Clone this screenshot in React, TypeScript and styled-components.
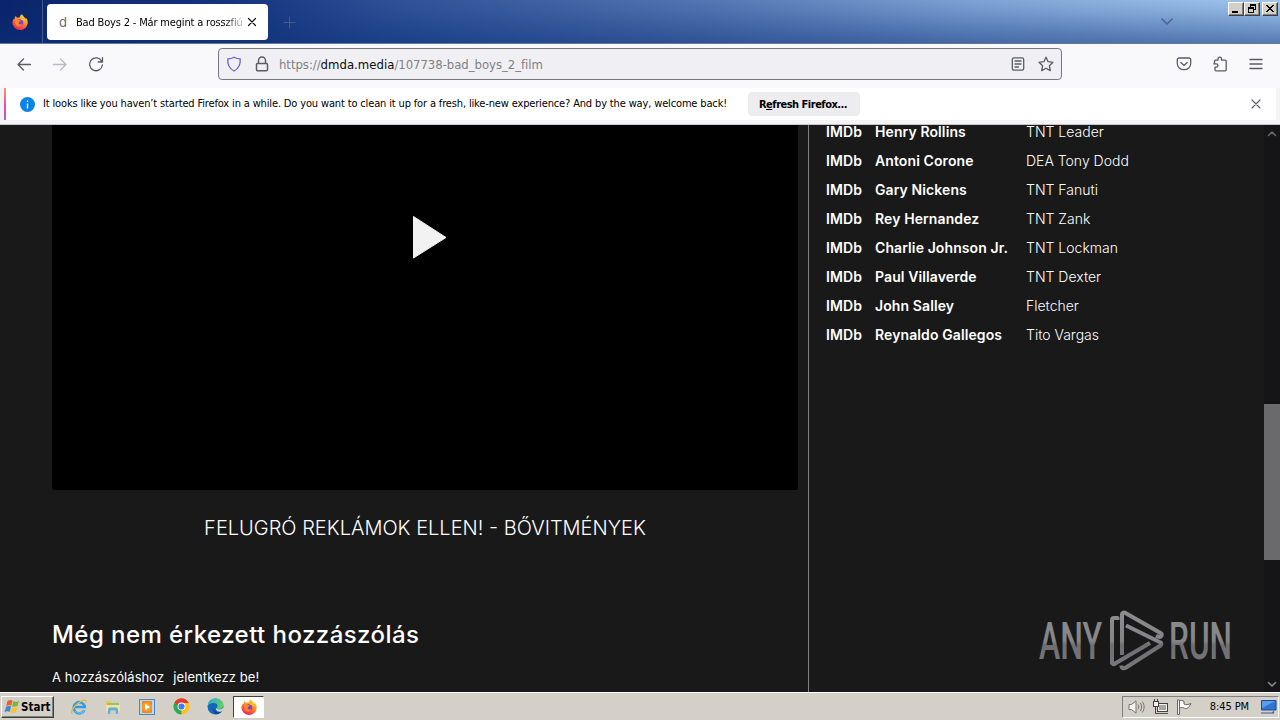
import React from 'react';
import styled, { createGlobalStyle, css } from 'styled-components';

const UI = `"DejaVu Sans Condensed", "DejaVu Sans", sans-serif`;

const Global = createGlobalStyle`
  html, body { margin: 0; padding: 0; }
  body { width: 1280px; height: 720px; overflow: hidden; background: #191919; }
  *, *::before, *::after { box-sizing: border-box; }
`;

const Screen = styled.div`
  width: 1280px;
  height: 720px;
  display: flex;
  flex-direction: column;
  overflow: hidden;
  font-family: ${UI};
  font-size: 11px;
  color: #000;
  white-space: pre;
`;

/* Title bar */
const TitleBar = styled.header`
  height: 44px;
  flex: none;
  display: flex;
  align-items: flex-start;
  border-bottom: 1px solid #67779c;
  background:
    linear-gradient(to bottom, rgba(10, 36, 106, 0) 0%, rgba(10, 48, 120, 0.1) 25%, rgba(10, 48, 120, 0.5) 100%),
    linear-gradient(to right, #0a246a 0%, #15347e 18%, #2c4f96 30%, #5475b2 55%, #7ea2d4 76%, #a0c6ee 100%);
`;

const BrandCell = styled.div`
  width: 43px;
  height: 43px;
  display: flex;
  align-items: center;
  justify-content: center;
  border-right: 1px solid #46598f;
  padding-right: 2px;
`;

const Tab = styled.div`
  width: 221px;
  height: 36px;
  margin: 4px 0 0 4px;
  padding: 0 10px 0 12px;
  display: flex;
  align-items: center;
  border-radius: 4px;
  background: #fff;
`;

const Favicon = styled.span`
  width: 17px;
  font: 13px Inter, sans-serif;
  color: #6a6a6e;
`;

const TabTitle = styled.span`
  width: 167px;
  overflow: hidden;
  padding-top: 1px;
  line-height: 17px;
  letter-spacing: -0.17px;
  mask-image: linear-gradient(to right, #000 148px, transparent 172px);
`;

const TabClose = styled.span`
  display: flex;
  margin-left: 4px;
`;

const NewTab = styled.span`
  display: flex;
  margin: 16px 0 0 15px;
`;

const ListTabs = styled.span`
  display: flex;
  margin: 17px 0 0 auto;
`;

const WindowButtons = styled.div`
  display: flex;
  margin: 2px 2px 0 54px;
`;

const WinButton = styled.span<{ $gap?: boolean }>`
  width: 16px;
  height: 14px;
  margin-left: ${p => (p.$gap ? 2 : 0)}px;
  display: flex;
  background: #d4d0c8;
  border: 1px solid;
  border-color: #fff #404040 #404040 #fff;
  box-shadow: inset -1px -1px 0 #808080;
`;

/* Navigation toolbar */
const NavBar = styled.nav`
  height: 44px;
  flex: none;
  display: flex;
  align-items: center;
  padding: 0 16px 4px;
  background: #f9f9fb;
`;

const NavButtons = styled.div`
  width: 202px;
  display: flex;
  gap: 20px;
`;

const UrlBar = styled.div`
  width: 844px;
  height: 32px;
  padding: 0 7px;
  display: flex;
  align-items: center;
  border: 1px solid #76767c;
  border-radius: 4px;
  background: #f0f0f4;
`;

const UrlText = styled.span`
  flex: 1;
  margin-left: 9px;
  font-size: 13px;
  letter-spacing: -0.04px;
  color: #808085;
`;

const UrlHost = styled.span`
  color: #0c0c0d;
  letter-spacing: 0.02px;
`;

const UrlIcon = styled.span<{ $ml: number }>`
  display: flex;
  margin-left: ${p => p.$ml}px;
`;

const NavEnd = styled.div`
  display: flex;
  gap: 20px;
  margin-left: auto;
`;

/* Notification bar */
const NoticeWrap = styled.div`
  height: 37px;
  flex: none;
  padding: 0 4px 4px;
  display: flex;
  background: #f4f4f6;
  border-bottom: 1px solid #c8c8cc;
`;

const Notice = styled.div`
  flex: 1;
  display: flex;
  align-items: center;
  padding-left: 14px;
  padding-right: 15px;
  background: #fff;
  border-left: 2px solid;
  border-image: linear-gradient(to bottom, #ff9a6a, #e8559a 50%, #a25fe0) 1;
`;

const NoticeText = styled.span`
  margin-left: 8px;
  padding-bottom: 1px;
  letter-spacing: -0.148px;
`;

const RefreshButton = styled.span`
  width: 112px;
  height: 24px;
  margin-left: 21px;
  padding-right: 2px;
  display: flex;
  align-items: center;
  justify-content: center;
  border-radius: 4px;
  background: #ededf0;
  font-weight: bold;
  letter-spacing: -0.5px;
`;

const NoticeClose = styled.span`
  display: flex;
  margin-left: auto;
`;

/* Page */
const Page = styled.div`
  flex: 1;
  min-height: 0;
  display: flex;
  background: #191919;
  color: #fff;
  font-family: Inter, sans-serif;
  overflow: hidden;
`;

const Main = styled.main`
  width: 809px;
  padding: 0 10px 0 52px;
  border-right: 1px solid #808080;
`;

const Player = styled.div`
  height: 365px;
  display: flex;
  justify-content: center;
  padding-top: 90px;
  padding-left: 9px;
  border-radius: 0 0 3px 3px;
  background: #000;
`;

const Extensions = styled.div`
  margin-top: 25px;
  text-align: center;
  font-size: 20px;
  line-height: 26px;
  font-weight: 300;
`;

const Heading = styled.h2`
  margin: 79px 0 0;
  font-size: 24px;
  line-height: 30px;
  font-weight: 500;
  letter-spacing: 0.44px;
`;

const LoginLine = styled.div`
  display: flex;
  gap: 9px;
  margin-top: 19px;
  font-size: 13px;
  line-height: 16px;
  letter-spacing: 0.08px;
`;

const Cast = styled.aside`
  flex: 1;
  padding-left: 17px;
`;

const CastRow = styled.div`
  display: grid;
  grid-template-columns: 49px 151px 1fr;
  height: 29px;
  align-items: center;
  font-size: 14px;
  font-weight: 300;

  &:first-child { margin-top: -8px; }
`;

const Strong = styled.span`
  font-weight: 600;
  letter-spacing: 0.1px;
`;

const Watermark = styled.div`
  position: absolute;
  left: 1036px;
  top: 606px;
  display: flex;
`;

const ScrollBar = styled.div`
  width: 16px;
  display: flex;
  flex-direction: column;
  align-items: center;
  justify-content: space-between;
  background: #151517;
`;

const ScrollArrow = styled.span`
  height: 16px;
  display: flex;
  align-items: center;
`;

const ScrollTrack = styled.div`
  flex: 1;
  width: 16px;
  padding-top: 263px;
`;

const ScrollThumb = styled.div`
  height: 156px;
  background: #6a6a6c;
`;

/* Taskbar */
const TaskBar = styled.footer`
  height: 28px;
  flex: none;
  display: flex;
  align-items: center;
  padding: 0 1px;
  background: #d4d0c8;
  border-top: 1px solid #fff;
`;

const StartButton = styled.div`
  width: 53px;
  height: 22px;
  padding-left: 2px;
  display: flex;
  align-items: center;
  border: 1px solid;
  border-color: #fff #404040 #404040 #fff;
  box-shadow: inset -1px -1px 0 #808080;
  font-weight: bold;
  font-size: 11.5px;
`;

const Launchers = styled.div`
  display: flex;
  align-items: center;
  margin-left: 8px;
`;

const Launcher = styled.span<{ $active?: boolean }>`
  width: ${p => (p.$active ? 31 : 34)}px;
  height: 22px;
  display: flex;
  align-items: center;
  justify-content: center;
  ${p => p.$active && css`
    border: 1px solid;
    border-color: #404040 #fff #fff #404040;
    background: #fff;
    margin-left: 1px;
  `}
`;

const Tray = styled.div`
  width: 157px;
  height: 22px;
  margin-left: auto;
  padding: 0 1px 0 5px;
  display: flex;
  align-items: center;
  gap: 7px;
  border: 1px solid;
  border-color: #808080 #fff #fff #808080;
`;

const Clock = styled.span`
  margin: 0 0 0 auto;
  padding-right: 4px;
  letter-spacing: -0.1px;
`;

const Firefox = ({ size }: { size: number }) => (
  <svg width={size} height={size} viewBox="0 0 16 16">
    <defs>
      <linearGradient id="ffo" x1="0.8" y1="0" x2="0.3" y2="1">
        <stop offset="0" stopColor="#ffe23c" />
        <stop offset="0.4" stopColor="#ff9a2a" />
        <stop offset="0.75" stopColor="#ff4a3c" />
        <stop offset="1" stopColor="#e6206c" />
      </linearGradient>
    </defs>
    <path d="M15.4 6.2C15 5 14 3.800 13.200 3.400c.5 1 .6 1.600.7 2C12.800 3 11 2.200 9.900.2c-1.500.8-2 2.200-2 3-.9 0-1.700.2-2.400.6-.9-.3-1.300-1-1.500-1.900C3 2.500 2.700 3.500 2.800 4.400 1.500 4.800 1 6 1 6l-.6 2.500A7.600 7.600 0 0 0 8 16c4.300 0 7.600-3.300 7.700-7.600 0-.8-.1-1.500-.3-2.200z" fill="url(#ffo)" />
    <circle cx="8" cy="8.500" r="3.300" fill="#8a3fc8" />
    <path d="M3.200 6.300c1-1 2.500-.9 3.600-.2 1 .1 1.900.1 2 .5-.1.700-1.300.9-1.700 1.300-.3.400 0 1.200-.8 1.500 1 1.600 3.200 1.300 4 .3-.6 2.500-3.300 3.600-5.500 2.300C3.300 11 2.500 8.500 3.200 6.300z" fill="#ff8a24" />
    <path d="M8.500 5c2-.8 4.300.5 4.600 2.900-.7-1-1.500-1.300-2.300-1.400C10 5.900 9.200 5.300 8.500 5z" fill="#ffc835" />
  </svg>
);

const Line = ({ w = 16, h = 16, c = '#5b5b66', sw = 1.300, d, o = 1 }: { w?: number; h?: number; c?: string; sw?: number; d: string; o?: number }) => (
  <svg width={w} height={h} viewBox={`0 0 ${w} ${h}`} fill="none" stroke={c} strokeWidth={sw} strokeLinecap="round" strokeLinejoin="round" opacity={o}>
    <path d={d} />
  </svg>
);

const Glyph = ({ d, c = '#000' }: { d: string; c?: string }) => (
  <svg width="14" height="12" viewBox="0 0 14 12" shapeRendering="crispEdges"><path d={d} fill={c} /></svg>
);

const StartFlag = () => (
  <svg width="17" height="17" viewBox="0 0 17 17">
    <path d="M3.500 3C5 1.600 7 1.700 8.600 2.600L7.300 7.800C5.600 7 4 7 2.200 8z" fill="#e8602c" />
    <path d="M9.400 3c1.700.9 3.600 1 5.600-.2l-1.400 5.300c-1.900 1-3.700 1-5.500.1z" fill="#7ab83c" />
    <path d="M2 8.800c1.800-1 3.400-1 5.100-.2l-1.400 5.200C4 13 2.400 13 .6 14z" fill="#3c86d8" />
    <path d="M7.900 9c1.700.9 3.600 1 5.500 0L12 14.200c-1.900 1-3.700.9-5.500 0z" fill="#f6c42c" />
  </svg>
);

const ExplorerE = () => (
  <svg width="18" height="18" viewBox="0 0 18 18" fill="none">
    <path d="M14.400 12a5.600 5.600 0 1 1 .4-3H5" stroke="#2f9ce0" strokeWidth="2.600" />
    <path d="M14.400 12a5.600 5.600 0 0 1-9.500 1" stroke="#6cc6f4" strokeWidth="1.200" />
    <path d="M2.500 15.500C-.5 15 4 8 9 4.500c4-2.800 8-3.400 7.200-.2" stroke="#e8b838" strokeWidth="1.300" />
  </svg>
);

const FolderIcon = () => (
  <svg width="18" height="18" viewBox="0 0 18 18">
    <path d="M2 3h5l1 1.500h7V13H2z" fill="#e8c860" />
    <path d="M3 5h12v2H3z" fill="#8fc37a" />
    <path d="M2 7h14v6H2z" fill="#f6e29a" />
    <path d="M4 16v-4.500a2 2 0 0 1 2-2h6a2 2 0 0 1 2 2V16h-2.300v-3.500H6.300V16z" fill="#5fb0dc" />
  </svg>
);

const MediaIcon = () => (
  <svg width="18" height="18" viewBox="0 0 18 18">
    <rect x="1.500" y="1.500" width="15" height="15" fill="#b8d8f0" stroke="#4a88c0" />
    <rect x="4" y="3" width="10" height="12" rx="1" fill="#f08a1c" />
    <circle cx="9" cy="9" r="4.800" fill="#f49a30" />
    <path d="M7 5.500v7l5-3.500z" fill="#fff" />
  </svg>
);

const ChromeIcon = () => (
  <svg width="17" height="17" viewBox="0 0 16 16">
    <path d="M8 8L1.500 4.250A7.500 7.500 0 0 1 14.500 4.250z" fill="#e33b2e" />
    <path d="M8 8L14.500 4.250A7.500 7.500 0 0 1 8 15.500z" fill="#fcc31e" />
    <path d="M8 8v7.500A7.500 7.500 0 0 1 1.500 4.250z" fill="#2da94f" />
    <path d="M8 4.250h6.500L11.200 9.900z" fill="#fcc31e" />
    <path d="M1.500 4.250L4.800 9.900 8 8V4.250z" fill="#2da94f" />
    <path d="M1.500 4.250 4.600 7 8 4.600h6.700A7.500 7.500 0 0 0 1.500 4.250z" fill="#e33b2e" />
    <circle cx="8" cy="8" r="3.700" fill="#fff" />
    <circle cx="8" cy="8" r="2.900" fill="#3f7fe8" />
  </svg>
);

const EdgeIcon = () => (
  <svg width="17" height="17" viewBox="0 0 16 16">
    <defs>
      <linearGradient id="edge" x1="0" y1="0" x2="1" y2="0.300">
        <stop offset="0" stopColor="#2aa8e0" />
        <stop offset="1" stopColor="#5fd068" />
      </linearGradient>
    </defs>
    <circle cx="8" cy="8" r="7.500" fill="#1466b8" />
    <path d="M.5 8A7.500 7.500 0 0 1 8 .5c4.500 0 7.500 3 7.500 6.200 0 2.300-1.700 3.700-3.700 3.700-1.800 0-2.500-.7-2.500-1.100 0-.4.600-.6.600-1.700C9.900 6 8.400 4.800 6.200 4.800 3.500 4.800 1 6.500.5 8z" fill="url(#edge)" />
    <path d="M6 8.500c0 3 2.500 4.700 5.300 4.700 1.300 0 2.300-.4 3.200-.9A7.500 7.500 0 0 1 9 15.400C6.500 14.500 5 12 6 8.500z" fill="#0c4a90" />
    <path d="M9.300 9.300c0 .5.800 1.300 2.600 1.300 1.400 0 2.500-.6 3.200-1.500l.9 2-2 1.300c-2.500 1.200-5.500.1-5.700-2.400z" fill="#d4d0c8" />
  </svg>
);

const SpeakerIcon = () => (
  <svg width="17" height="16" viewBox="0 0 17 16" fill="none" stroke="#77756f">
    <path d="M1 5.500h2.500L8 1.800v12.400l-4.500-3.700H1z" fill="#f6f5f2" />
    <path d="M10 5.500c1 1.500 1 3.500 0 5M12.200 3.800c1.900 2.500 1.900 5.900 0 8.400M14.300 2.500c2.400 3.500 2.400 7.500 0 11" />
  </svg>
);

const NetworkIcon = () => (
  <svg width="17" height="16" viewBox="0 0 17 16">
    <rect x="5.500" y="4.500" width="10" height="8" fill="#a9a7a2" stroke="#44423e" />
    <path d="M6.500 5.500h8v6h-8z" fill="none" stroke="#f4f3ef" />
    <path d="M5 14.500h11" stroke="#55534f" fill="none" />
    <rect x="1.500" y="2.500" width="5" height="5" fill="#f4f3ef" stroke="#44423e" />
    <path d="M2.500 0v2M5.500 0v2M3.500 8v6.500h2" stroke="#44423e" fill="none" />
  </svg>
);

const TrayFlag = () => (
  <svg width="17" height="16" viewBox="0 0 17 16">
    <path d="M3 2c2-1 3.800-.6 5 .3V5c2 1.200 4 .6 7-.5-1 2-2.500 4.500-4.500 5-1.500.3-2.500-.8-4-.9-1.500 0-2.500.2-3.500.6z" fill="#fbfaf8" stroke="#66645f" />
    <path d="M1.500 1h2v14.500h-2z" fill="#fbfaf8" stroke="#66645f" />
  </svg>
);

const DesktopIcon = () => (
  <svg width="17" height="16" viewBox="0 0 17 16">
    <path d="M1.500 1.500h14.500v9.500H1.500z" fill="#2f74d4" stroke="#1c4a96" />
    <path d="M2 2h13.500L2 9z" fill="#5c9cec" />
    <path d="M1 13.500h11l2-2v3H1z" fill="#3c5a8c" />
  </svg>
);

const AnyRun = () => (
  <svg width="220" height="76" viewBox="0 0 220 76" overflow="visible">
    <defs>
      <linearGradient id="steel" x1="0" y1="0" x2="0" y2="70" gradientUnits="userSpaceOnUse">
        <stop offset="0" stopColor="#8e8e90" />
        <stop offset="0.500" stopColor="#858587" />
        <stop offset="0.560" stopColor="#6f6f71" />
        <stop offset="1" stopColor="#7c7c7e" />
      </linearGradient>
    </defs>
    <g fill="url(#steel)" fontFamily="Roboto, sans-serif" fontSize="52" fontWeight="500">
      <text x="3" y="53" textLength="63" lengthAdjust="spacingAndGlyphs">ANY</text>
      <text x="133" y="53" textLength="63" lengthAdjust="spacingAndGlyphs">RUN</text>
    </g>
    <g fill="none" stroke="url(#steel)" strokeWidth="4" strokeLinejoin="round">
      <path d="M81.500 14v-2h-3.500a2 2 0 0 0-2 2V55.500a2 2 0 0 0 3.500 1.800L114 37" />
      <path d="M86 49V8.500a2 2 0 0 1 3-1.700L124.500 27a2 2 0 0 1 .5 3.500c-1.500 1-3 .3-5-.8" />
      <path d="M90 19.500l34.500 17a1.800 1.800 0 0 1 0 3L90 61.500c-2.500 1.500-4.500.8-4.500-1.500v-.5" />
    </g>
  </svg>
);

const CAST = [
  ['Henry Rollins', 'TNT Leader'],
  ['Antoni Corone', 'DEA Tony Dodd'],
  ['Gary Nickens', 'TNT Fanuti'],
  ['Rey Hernandez', 'TNT Zank'],
  ['Charlie Johnson Jr.', 'TNT Lockman'],
  ['Paul Villaverde', 'TNT Dexter'],
  ['John Salley', 'Fletcher'],
  ['Reynaldo Gallegos', 'Tito Vargas'],
];

export default function App() {
  return (
    <Screen>
      <Global />
      <TitleBar>
        <BrandCell><Firefox size={16} /></BrandCell>
        <Tab>
          <Favicon>d</Favicon>
          <TabTitle>Bad Boys 2 - Már megint a rosszfiúk</TabTitle>
          <TabClose><Line w={10} h={10} c="#15141a" d="M1.500 1.500l7 7M8.500 1.500l-7 7" sw={1.200} /></TabClose>
        </Tab>
        <NewTab><Line w={13} h={13} c="#4b5a70" sw={1} d="M6.500 1v11M1 6.500h11" /></NewTab>
        <ListTabs><Line w={14} h={10} c="#46648f" sw={1.500} d="M2 2l5 5 5-5" /></ListTabs>
        <WindowButtons>
          <WinButton><Glyph d="M3 8h6v2H3z" /></WinButton>
          <WinButton><Glyph d="M5 1h6v6H9V6h1V3H6v1H5zM3 4h6v6H3zM4 6v3h4V6z" /></WinButton>
          <WinButton $gap><Glyph d="M3 2h2v1h1v1h2V3h1V2h2v1h-1v1H9v1H8v1h1v1h1v1h1v1H9V8H8V7H6v1H5v1H3V8h1V7h1V6h1V5H5V4H4V3H3z" /></WinButton>
        </WindowButtons>
      </TitleBar>

      <NavBar>
        <NavButtons>
          <Line d="M14.500 8.500H2M7.500 3L2 8.500l5.500 5.500" />
          <Line d="M1.500 8.500H14M8.500 3L14 8.500 8.500 14" o={0.4} />
          <Line d="M13.800 5.500A6.400 6.400 0 1 0 14.400 9M14.500 1.700V6H10.200" />
        </NavButtons>
        <UrlBar>
          <Line c="#6a5fd0" d="M8 1.200C6 2.300 4 2.800 1.800 2.900 1.400 8.500 3 12.500 8 15c5-2.500 6.600-6.500 6.200-12.100C12 2.800 10 2.300 8 1.200z" />
          <UrlIcon $ml={12}>
            <Line sw={1.500} d="M3.500 7.500h9a1 1 0 0 1 1 1v5.200a1 1 0 0 1-1 1h-9a1 1 0 0 1-1-1V8.500a1 1 0 0 1 1-1zM4.500 7.500V4.500a3.500 3.500 0 0 1 7 0v3" />
          </UrlIcon>
          <UrlText>https://<UrlHost>dmda.media</UrlHost>/107738-bad_boys_2_film</UrlText>
          <Line d="M4 1.800h8a1.700 1.700 0 0 1 1.700 1.700v9a1.700 1.700 0 0 1-1.700 1.700H4a1.700 1.700 0 0 1-1.700-1.700v-9A1.700 1.700 0 0 1 4 1.800zM5 5h6M5 8h6M5 11h3.500" />
          <UrlIcon $ml={12}>
            <Line d="M8 1.200l2.100 4.500 4.900.6-3.600 3.400.9 4.900L8 12.200l-4.300 2.400.9-4.900L1 6.300l4.900-.6z" />
          </UrlIcon>
        </UrlBar>
        <NavEnd>
          <Line d="M3 2h10a1.700 1.700 0 0 1 1.700 1.700v3.800c0 3.500-3 6.200-6.700 6.200S1.300 11 1.300 7.500V3.700A1.700 1.700 0 0 1 3 2zM4.800 6.500L8 9.500l3.200-3" />
          <Line d="M6 4.200V2.800a1.700 1.700 0 0 1 3.500 0v1.400h3.700a1 1 0 0 1 1 1v8.600a1 1 0 0 1-1 1H4a1 1 0 0 1-1-1v-2.600h1.300a1.600 1.600 0 0 0 0-3.300H1.700M2.500 7.500V5.200a1 1 0 0 1 1-1H6" />
          <Line d="M2 3.500h12M2 8h12M2 12.500h12" />
        </NavEnd>
      </NavBar>

      <NoticeWrap>
        <Notice>
          <svg width="15" height="15" viewBox="0 0 15 15">
            <circle cx="7.500" cy="7.500" r="7.500" fill="#0a84e4" />
            <path d="M7.500 3.500v1.500M7.500 6.500v5" stroke="#fff" strokeWidth="1.300" />
          </svg>
          <NoticeText>It looks like you haven’t started Firefox in a while. Do you want to clean it up for a fresh, like-new experience? And by the way, welcome back!</NoticeText>
          <RefreshButton><span>R<u>e</u>fresh Firefox...</span></RefreshButton>
          <NoticeClose><Line w={10} h={10} sw={1.100} d="M1 1l8 8M9 1L1 9" /></NoticeClose>
        </Notice>
      </NoticeWrap>

      <Page>
        <Main>
          <Player>
            <svg width="34" height="44" viewBox="0 0 34 44">
              <path d="M.5 1.500L33 22.500 .5 43z" fill="#f2f2f2" stroke="#f2f2f2" strokeLinejoin="round" />
            </svg>
          </Player>
          <Extensions>FELUGRÓ REKLÁMOK ELLEN! - BŐVITMÉNYEK</Extensions>
          <Heading>Még nem érkezett hozzászólás</Heading>
          <LoginLine><span>A hozzászóláshoz</span><span>jelentkezz be!</span></LoginLine>
        </Main>
        <Cast>
          {CAST.map(([name, role]) => (
            <CastRow key={name}>
              <Strong>IMDb</Strong>
              <Strong>{name}</Strong>
              <span>{role}</span>
            </CastRow>
          ))}
        </Cast>
        <ScrollBar>
          <ScrollArrow><Line w={10} h={7} c="#6a6a6e" sw={1.500} d="M1.500 5.500L5 2l3.500 3.500" /></ScrollArrow>
          <ScrollTrack><ScrollThumb /></ScrollTrack>
          <ScrollArrow><Line w={10} h={7} c="#8a8a8e" sw={1.500} d="M1.500 1.500L5 5l3.500-3.500" /></ScrollArrow>
        </ScrollBar>
        <Watermark><AnyRun /></Watermark>
      </Page>

      <TaskBar>
        <StartButton><StartFlag />Start</StartButton>
        <Launchers>
          <Launcher><ExplorerE /></Launcher>
          <Launcher><FolderIcon /></Launcher>
          <Launcher><MediaIcon /></Launcher>
          <Launcher><ChromeIcon /></Launcher>
          <Launcher><EdgeIcon /></Launcher>
          <Launcher $active><Firefox size={16} /></Launcher>
        </Launchers>
        <Tray>
          <SpeakerIcon />
          <NetworkIcon />
          <TrayFlag />
          <Clock>8:45 PM</Clock>
          <DesktopIcon />
        </Tray>
      </TaskBar>
    </Screen>
  );
}
